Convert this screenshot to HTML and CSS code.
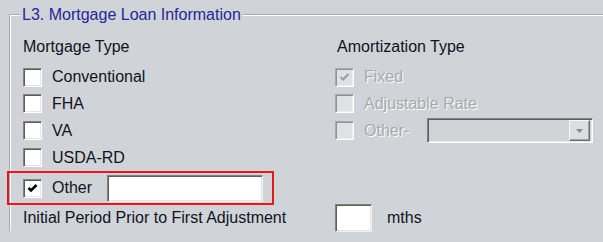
FILE: index.html
```html
<!DOCTYPE html>
<html>
<head>
<meta charset="utf-8">
<title>L3. Mortgage Loan Information</title>
<link rel="stylesheet" href="styles.css">
</head>
<body>
<fieldset class="group">
  <legend class="group-title">L3. Mortgage Loan Information</legend>
  <div class="grid">
    <div class="heading">Mortgage Type</div>
    <div class="heading heading-right">Amortization Type</div>

    <div class="row"><span class="cb"></span><span class="label">Conventional</span></div>
    <div class="row disabled"><span class="cb"><svg class="check" viewBox="0 0 17 17"><polyline points="4.5,8 7,10.5 12.5,5" /></svg></span><span class="label">Fixed</span></div>

    <div class="row"><span class="cb"></span><span class="label">FHA</span></div>
    <div class="row disabled"><span class="cb"></span><span class="label">Adjustable Rate</span></div>

    <div class="row"><span class="cb"></span><span class="label">VA</span></div>
    <div class="row disabled">
      <span class="cb"></span><span class="label other-label">Other-</span>
      <div class="combo">
        <div class="combo-btn"><svg class="arrow" viewBox="0 0 7 4"><polygon points="0,0 7,0 3.5,4" /></svg></div>
      </div>
    </div>

    <div class="row"><span class="cb"></span><span class="label">USDA-RD</span></div>
    <div></div>

    <div class="row highlight"><span class="cb"><svg class="check" viewBox="0 0 17 17"><polyline points="4.5,8 7,10.5 12.5,5" /></svg></span><span class="label">Other</span><div class="field other-field"></div></div>
    <div></div>

    <div class="row"><span class="label">Initial Period Prior to First Adjustment</span></div>
    <div class="row"><div class="field months-field"></div><span class="label unit">mths</span></div>
  </div>
</fieldset>
</body>
</html>
```

FILE: styles.css
```css
html, body {
  margin: 0;
  height: 100%;
  overflow: hidden;
}

body {
  background: #d0d4d8;
  font-family: "Liberation Sans", Arial, sans-serif;
  font-size: 16px;
  color: #12121e;
}

.group {
  margin: 6px 0 0 9px;
  padding: 0 0 0 12px;
  border-style: groove;
  border-color: #ffffff;
  border-width: 2px 0 0 2px;
  min-width: 0;
}

.group-title {
  margin-left: -3px;
  padding: 0 2px;
  line-height: 18px;
  color: #26269a;
}

.grid {
  display: grid;
  grid-template-columns: 312px 1fr;
  grid-template-rows: 30px 26px 27px 27px 27px 34px 26px;
  margin-top: 10px;
}

.heading {
  align-self: start;
  line-height: 26px;
}

.heading-right {
  padding-left: 2px;
}

.row {
  display: flex;
  align-items: center;
  min-width: 0;
}

.label {
  white-space: nowrap;
  line-height: 18px;
}

.cb {
  flex: none;
  width: 19px;
  height: 19px;
  box-sizing: border-box;
  margin-right: 10px;
  background: #ffffff;
  border: 1px solid;
  border-color: #838383 #ffffff #ffffff #838383;
  box-shadow: inset 1px 1px 0 #5c5c5c, inset -1px -1px 0 #e6e6e6;
  display: flex;
}

.check {
  width: 17px;
  height: 17px;
}

.check polyline {
  fill: none;
  stroke: #000000;
  stroke-width: 2.6;
}

.disabled {
  color: #a6aaae;
}

.disabled .label {
  text-shadow: 1px 1px 0 #ffffff;
}

.disabled .cb {
  background: #dfe2e5;
  border-color: #a6aaae #ffffff #ffffff #a6aaae;
  box-shadow: inset 1px 1px 0 #8f9397, inset -1px -1px 0 #eceef0;
}

.disabled .check polyline {
  stroke: #9a9ea2;
  stroke-width: 2.2;
}

.other-label {
  width: 63px;
}

.combo {
  flex: none;
  width: 166px;
  height: 25px;
  box-sizing: border-box;
  border: 1px solid;
  border-color: #808080 #ffffff #ffffff #808080;
  box-shadow: inset 1px 1px 0 #5e5e5e, inset -1px -1px 0 #e8e8e8;
  background: #d0d4d8;
  display: flex;
  justify-content: flex-end;
  padding: 1px 2px 2px 0;
}

.combo-btn {
  width: 21px;
  height: 21px;
  box-sizing: border-box;
  border: 1px solid;
  border-color: #f6f6f6 #6e6e6e #6e6e6e #f6f6f6;
  box-shadow: inset -1px -1px 0 #a2a2a2;
  background: #dcdfe2;
  display: flex;
  align-items: center;
  justify-content: center;
}

.arrow {
  width: 7px;
  height: 4px;
}

.arrow polygon {
  fill: #8c8c8c;
}

.highlight {
  align-self: stretch;
  width: 267px;
  box-sizing: border-box;
  margin-left: -16px;
  padding-left: 14px;
  border: 2px solid #e8161e;
}

.field {
  flex: none;
  box-sizing: border-box;
  background: #ffffff;
  border: 1px solid;
  border-color: #808080 #f2f2f2 #f2f2f2 #808080;
  box-shadow: inset 1px 1px 0 #5e5e5e, inset -1px -1px 0 #e4e4e4;
}

.other-field {
  width: 156px;
  height: 27px;
  margin-left: 15px;
}

.months-field {
  width: 37px;
  height: 28px;
  margin-right: 15px;
}
```
